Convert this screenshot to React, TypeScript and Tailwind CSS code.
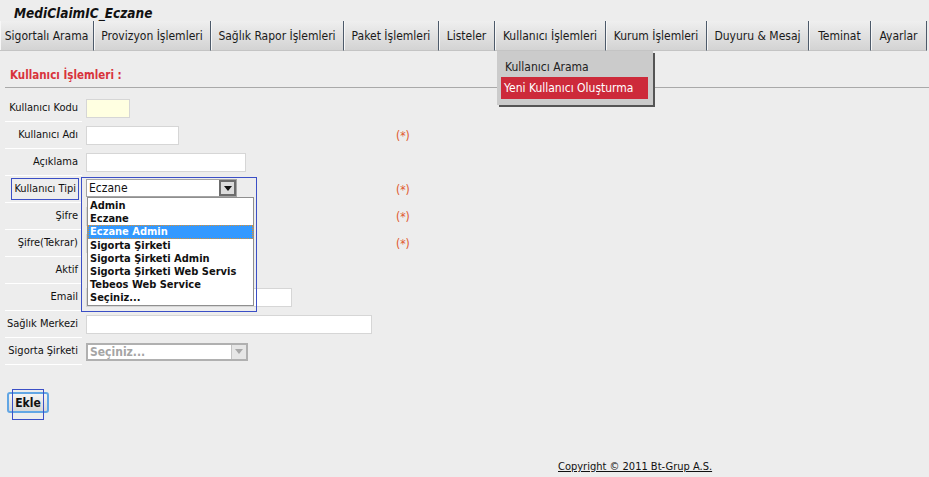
import type { ReactNode } from "react";

const sekmeler = [
  { ad: "Sigortalı Arama", genislik: "w-[94px]" },
  { ad: "Provizyon İşlemleri", genislik: "w-[117px]" },
  { ad: "Sağlık Rapor İşlemleri", genislik: "w-[133px]" },
  { ad: "Paket İşlemleri", genislik: "w-[95px]" },
  { ad: "Listeler", genislik: "w-[56px]" },
  { ad: "Kullanıcı İşlemleri", genislik: "w-[111px]" },
  { ad: "Kurum İşlemleri", genislik: "w-[101px]" },
  { ad: "Duyuru & Mesaj", genislik: "w-[102px]" },
  { ad: "Teminat", genislik: "w-[62px]" },
  { ad: "Ayarlar", genislik: "w-[56px]" },
];

const tipler = [
  "Admin",
  "Eczane",
  "Eczane Admin",
  "Sigorta Şirketi",
  "Sigorta Şirketi Admin",
  "Sigorta Şirketi Web Servis",
  "Tebeos Web Service",
  "Seçiniz...",
];

function Satir({
  etiket,
  children,
  zorunlu,
  odak,
}: {
  etiket: string;
  children?: ReactNode;
  zorunlu?: boolean;
  odak?: boolean;
}) {
  return (
    <div className="flex h-[27px] items-stretch">
      <div className="flex w-[77px] items-center justify-end border-b border-white pr-[4px]">
        <span
          className={
            odak
              ? "-mr-[1px] flex h-[22px] items-center border border-[#3b4fc6] px-[2px]"
              : ""
          }
        >
          {etiket}
        </span>
      </div>
      <div className="relative flex w-[314px] items-center pl-[4px]">
        {children}
      </div>
      <div className="flex items-center text-[12px] text-[#e0582c]">
        {zorunlu ? "(*)" : ""}
      </div>
    </div>
  );
}

function Kutu({ genislik, sari }: { genislik: string; sari?: boolean }) {
  return (
    <div
      className={`h-[19px] border border-[#d6d6d6] ${genislik} ${
        sari ? "bg-[#ffffe1]" : "bg-white"
      }`}
    />
  );
}

function Ok({ soluk }: { soluk?: boolean }) {
  return (
    <svg width="8" height="5" viewBox="0 0 8 5">
      <path d="M0 0h8L4 5z" fill={soluk ? "#a8a8a8" : "#111"} />
    </svg>
  );
}

export default function App() {
  return (
    <div className="relative h-[477px] w-[929px] overflow-hidden bg-[#ededed] font-[Tahoma,'DejaVu_Sans_Condensed','DejaVu_Sans',sans-serif] text-[11px] text-[#111]">
      <div className="h-[21px] pl-[14px] pt-[5px] text-[13.5px] font-bold italic leading-[16px]">
        MediClaimIC_Eczane
      </div>

      <nav className="relative flex h-[30px] text-[12px]">
        {sekmeler.map((s) => (
          <div
            key={s.ad}
            className={`flex ${s.genislik} shrink-0 items-center justify-center border-r border-r-[#4d5a6a] border-b border-b-[#c4c4c4] bg-gradient-to-b from-[#efefef] to-[#d3d3d3] text-[#1a1a1a] shadow-[inset_1px_0_0_#f7f7f7]`}
          >
            {s.ad}
          </div>
        ))}

        <div className="absolute left-[497px] top-[30px] z-10 h-[54px] w-[156px] bg-[#cbcbcb] pl-[4px] pt-[5px] text-[12px] shadow-[2px_2px_0_#555]">
          <div className="flex h-[21px] items-center pl-[4px] text-[#222]">
            Kullanıcı Arama
          </div>
          <div className="flex h-[22px] w-[147px] items-center bg-[#cd2a3a] pl-[3px] text-white">
            Yeni Kullanıcı Oluşturma
          </div>
        </div>
      </nav>

      <div className="pl-[10px] pt-[17px] text-[11.5px] font-bold leading-[14px] text-[#d8333b]">
        Kullanıcı İşlemleri :
      </div>
      <div className="ml-[5px] mt-[5px] h-px bg-[#a9a9a9]" />

      <div className="ml-[5px] mt-[7px] flex flex-col">
        <Satir etiket="Kullanıcı Kodu">
          <Kutu genislik="w-[44px]" sari />
        </Satir>
        <Satir etiket="Kullanıcı Adı" zorunlu>
          <Kutu genislik="w-[93px]" />
        </Satir>
        <Satir etiket="Açıklama">
          <Kutu genislik="w-[160px]" />
        </Satir>
        <Satir etiket="Kullanıcı Tipi" zorunlu odak>
          <div className="absolute left-[-1px] top-[1px] z-10 h-[135px] w-[176px] border border-[#3b4fc6] pl-[4px] pt-[1px]">
            <div className="flex h-[18px] w-[151px] items-center border border-[#a4a4a4] bg-white pl-[2px] text-[12px]">
              <span className="flex-1">Eczane</span>
              <span className="flex h-[16px] w-[17px] items-center justify-center border-2 border-[#6c6c6c] bg-[#dcdcdc]">
                <Ok />
              </span>
            </div>
            <div className="ml-[1px] w-[167px] border border-[#8f8f8f] bg-white py-[1px] text-[11px] font-bold leading-[13px]">
              {tipler.map((t) =>
                t === "Eczane Admin" ? (
                  <div
                    key={t}
                    className="h-[14px] border border-dotted border-[#e0902c] bg-[#3399ff] pl-[1px] leading-[12px] text-white"
                  >
                    {t}
                  </div>
                ) : (
                  <div key={t} className="h-[13px] pl-[2px]">
                    {t}
                  </div>
                ),
              )}
            </div>
          </div>
        </Satir>
        <Satir etiket="Şifre" zorunlu>
          <Kutu genislik="w-[160px]" />
        </Satir>
        <Satir etiket="Şifre(Tekrar)" zorunlu>
          <Kutu genislik="w-[160px]" />
        </Satir>
        <Satir etiket="Aktif" />
        <Satir etiket="Email">
          <Kutu genislik="w-[206px]" />
        </Satir>
        <Satir etiket="Sağlık Merkezi">
          <Kutu genislik="w-[286px]" />
        </Satir>
        <Satir etiket="Sigorta Şirketi">
          <div className="flex h-[18px] w-[162px] items-center border-2 border-[#b0b0b0] bg-white pl-[2px] text-[12px] font-bold text-[#a5a5a5]">
            <span className="flex-1">Seçiniz...</span>
            <span className="flex h-[14px] w-[15px] items-center justify-center border-l border-[#c4c4c4] bg-[#e6e6e6]">
              <Ok soluk />
            </span>
          </div>
        </Satir>
      </div>

      <div className="relative ml-[7px] mt-[27px] h-[21px] w-[42px]">
        <button
          type="button"
          className="flex h-[21px] w-[42px] items-center justify-center rounded-[3px] border-2 border-[#62a6e4] bg-gradient-to-b from-[#f4f4f4] to-[#d8d8d8] text-[12px] font-bold"
        >
          Ekle
        </button>
        <div className="absolute left-[5px] top-[-3px] h-[31px] w-[32px] border border-[#3b4fc6]" />
      </div>

      <div className="ml-[558px] mt-[46px] text-[11px] text-[#111] underline">
        Copyright © 2011 Bt-Grup A.S.
      </div>
    </div>
  );
}
